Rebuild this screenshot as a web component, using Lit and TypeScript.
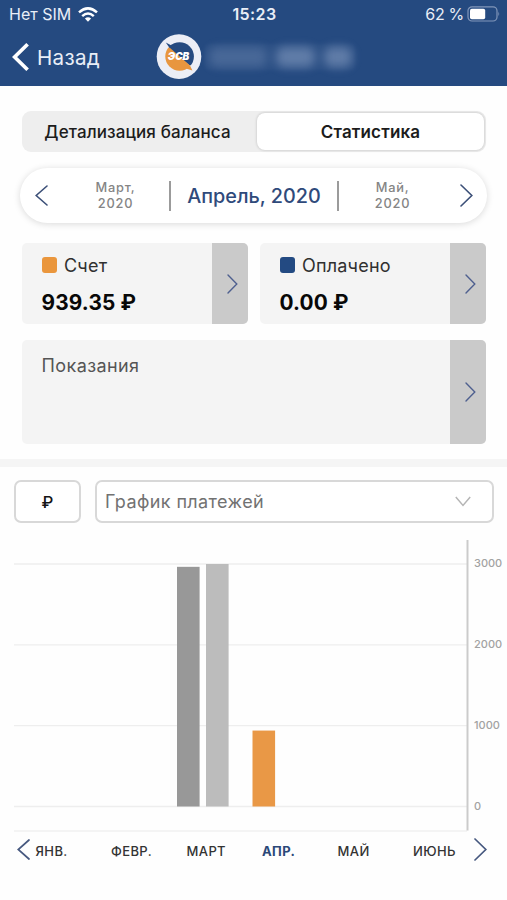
import { LitElement, html, css, svg } from "lit";
import { customElement, property } from "lit/decorators.js";
import { classMap } from "lit/directives/class-map.js";

const chevron = (w: number, h: number, left = false, stroke = 1.6) => html`
  <svg width=${w} height=${h} viewBox="0 0 ${w} ${h}" fill="none" stroke="currentColor" stroke-width=${stroke} stroke-linecap="round">
    <path d=${left ? `M${w - 1} 1L1.2 ${h / 2}L${w - 1} ${h - 1}` : `M1 1L${w - 1.2} ${h / 2}L1 ${h - 1}`} />
  </svg>`;

@customElement("top-bar")
export class TopBar extends LitElement {
  static styles = css`
    :host { display: block; height: 86px; background: #254a80; color: #e9eef7; }
    .status { display: grid; grid-template-columns: 1fr auto 1fr; height: 28px; align-items: center; padding: 0 7px 0 9px; font-size: 16px; }
    .left, .right { display: flex; align-items: center; }
    .left { gap: 7px; }
    .right { justify-content: flex-end; gap: 3px; }
    .charge { letter-spacing: -0.3px; }
    .time { font-weight: 600; letter-spacing: 0.4px; }
    .nav { display: flex; align-items: center; height: 58px; padding-left: 12px; }
    .back { display: flex; align-items: center; gap: 8px; width: 144px; font-size: 20.6px; letter-spacing: 0.3px; }
    .account { display: flex; align-items: center; height: 26px; width: 150px; margin-left: 3px; border-radius: 5px; background: rgba(150, 172, 208, 0.06); filter: blur(1.5px); }
    .chips { display: flex; align-items: center; gap: 9px; padding-left: 4px; filter: blur(5px); opacity: 0.42; }
    .chip { height: 20px; border-radius: 8px; background: #a9bbd9; }
    .c1 { width: 58px; opacity: 0.55; }
    .c2 { width: 39px; }
    .c3 { width: 28px; }
    svg { display: block; flex: none; }
  `;
  render() {
    return html`
      <div class="status">
        <div class="left">
          <span>Нет SIM</span>
          <svg width="20" height="15" viewBox="0 0 20 15" fill="none" stroke="#fff" stroke-width="2.5">
            <path d="M1 5.4Q10-2.6 19 5.4" /><path d="M4.2 9.1Q10 3.8 15.8 9.1" />
            <path d="M10 14.8L6.9 11.5Q10 8.9 13.1 11.5Z" fill="#fff" stroke="none" />
          </svg>
        </div>
        <span class="time">15:23</span>
        <div class="right">
          <span class="charge">62 %</span>
          <svg width="33" height="16" viewBox="0 0 33 16">
            <rect x="1" y="0.8" width="29" height="14.2" rx="4" fill="none" stroke="#8196b9" stroke-width="1.2" />
            <rect x="3" y="2.8" width="15.2" height="10.4" rx="1.8" fill="#fff" />
            <path d="M31.4 5.6Q33 7.9 31.4 10.2Z" fill="#8196b9" />
          </svg>
        </div>
      </div>
      <div class="nav">
        <div class="back">
          <svg width="17" height="28" viewBox="0 0 17 28" fill="none" stroke="#fff" stroke-width="3.7">
            <path d="M15.6 1.3L2.6 14L15.6 26.7" />
          </svg>
          <span>Назад</span>
        </div>
        <svg width="46" height="46" viewBox="0 0 46 46">
          <defs>
            <clipPath id="upper"><path d="M15 4H42V33.5L33 31L15 16L10 8Z" /></clipPath>
            <clipPath id="lower"><path d="M4 13H12.5L33 31.5L38 40H4Z" /></clipPath>
          </defs>
          <circle cx="23" cy="22.6" r="22.3" fill="#eceef6" />
          <circle cx="23.6" cy="22.5" r="14.3" fill="#254a80" clip-path="url(#upper)" />
          <circle cx="23.6" cy="22.5" r="14.3" fill="#e8963f" clip-path="url(#lower)" />
          <path d="M9.8 8.6L17.4 12.4L20.5 11L23 24L14.6 15.6Z" fill="#254a80" />
          <path d="M13.5 13.5L34 31.6L36.4 36.6L29 34.2L14 23Z" fill="#e8963f" />
          <text x="22.5" y="26.3" text-anchor="middle" font-family="Inter, sans-serif" font-size="10.4" font-weight="900" font-style="italic" textLength="21.5" lengthAdjust="spacingAndGlyphs" fill="#fff">ЭСВ</text>
        </svg>
        <div class="account"><div class="chips"><i class="chip c1"></i><i class="chip c2"></i><i class="chip c3"></i></div></div>
      </div>`;
  }
}

@customElement("summary-card")
export class SummaryCard extends LitElement {
  @property() label = "";
  @property() amount = "";
  @property() tone = "";
  static styles = css`
    :host { display: flex; border-radius: 5px; overflow: hidden; background: #f4f4f4; }
    .body { flex: 1; padding: 9px 0 0 20px; }
    .label { display: flex; align-items: center; gap: 7px; height: 26px; font-size: 18px; color: #303030; letter-spacing: 0.2px; }
    .muted { color: #555; padding-top: 3px; letter-spacing: 0.4px; }
    .swatch { width: 15.5px; height: 15.5px; border-radius: 3px; }
    .orange { background: #ea963c; }
    .blue { background: #234a82; }
    .amount { margin-top: 12px; line-height: 26px; font-size: 20.8px; font-weight: 700; color: #080808; letter-spacing: 0.15px; }
    .more { display: flex; align-items: center; justify-content: center; width: 35.5px; background: #cacaca; color: #4f608f; padding-left: 6px; box-sizing: border-box; }
  `;
  render() {
    return html`
      <div class="body">
        <div class=${classMap({ label: true, muted: !this.tone })}>
          ${this.tone ? html`<i class="swatch ${this.tone}"></i>` : ""}<span>${this.label}</span>
        </div>
        ${this.amount ? html`<div class="amount">${this.amount}</div>` : ""}
      </div>
      <div class="more">${chevron(11, 20, false, 1.4)}</div>`;
  }
}

@customElement("payment-chart")
export class PaymentChart extends LitElement {
  private ticks = [3000, 2000, 1000, 0];
  private bars = [
    { x: 177, value: 2965, fill: "#989898" },
    { x: 206, value: 3000, fill: "#bcbcbc" },
    { x: 252.5, value: 939.35, fill: "#e99846" },
  ];
  private months = ["ЯНВ.", "ФЕВР.", "МАРТ", "АПР.", "МАЙ", "ИЮНЬ"];
  private y(value: number) {
    return 266.5 - (value / 3000) * 242.5;
  }
  static styles = css`
    :host { display: block; }
    .plot { display: block; }
    .tick { font: 500 11px Inter, sans-serif; fill: #a2a2a2; }
    .months { display: flex; align-items: center; height: 38px; padding-left: 17px; font-size: 13px; font-weight: 500; letter-spacing: 0.4px; color: #333; }
    .prev, .next { display: flex; color: #46587f; }
    .prev { width: 18.5px; margin-top: -3px; }
    .next { margin: -4px 0 0 -14.5px; }
    .month { width: 75.5px; flex: none; }
    .current { color: #2b4878; font-weight: 700; }
  `;
  render() {
    return html`
      <svg class="plot" width="507" height="292" viewBox="0 0 507 292">
        ${this.ticks.map((t) => svg`
          <path d="M14 ${this.y(t)}H467" stroke="#eeeeee" stroke-width="1.4" />
          <text class="tick" x="474" y=${this.y(t) + 3}>${t}</text>`)}
        <path d="M14 291H467" stroke="#f0f0f0" stroke-width="1.6" />
        <path d="M467.5 0V290.5" stroke="#cbcbcb" stroke-width="2" />
        ${this.bars.map((b) => svg`<rect x=${b.x} y=${this.y(b.value)} width="22.6" height=${266.5 - this.y(b.value)} fill=${b.fill} />`)}
      </svg>
      <div class="months">
        <span class="prev">${chevron(13, 21, true, 1.7)}</span>
        ${this.months.map((m, i) => html`<div class=${classMap({ month: true, current: i === 3 })}>${m}</div>`)}
        <span class="next">${chevron(13, 23, false, 1.7)}</span>
      </div>`;
  }
}

@customElement("app-root")
export class AppRoot extends LitElement {
  static styles = css`
    :host { display: block; height: 900px; overflow: hidden; background: #fefefe; font-family: Inter, "Liberation Sans", sans-serif; }
    .tabs { display: flex; box-sizing: border-box; width: 464px; height: 41px; margin: 25px 0 0 22px; padding: 2px; border-radius: 9px; background: #eeeeee; font-size: 17px; color: #1c1c1c; }
    .tab { display: flex; align-items: center; justify-content: center; flex: 1; padding-right: 6px; font-weight: 500; letter-spacing: 0.1px; }
    .tab.active { box-sizing: border-box; flex: none; width: 227px; padding: 0; border-radius: 8px; background: #fff; box-shadow: 0 0 3px rgba(0, 0, 0, 0.22); font-weight: 600; letter-spacing: 0.15px; }
    .switcher { display: flex; align-items: center; box-sizing: border-box; width: 467px; height: 55px; margin: 16px 0 0 20px; padding: 0 13px 0 15px; border-radius: 28px; background: #fff; box-shadow: 0 1px 7px rgba(0, 0, 0, 0.15); }
    .arrow { display: flex; width: 14px; color: #3c5078; }
    .near { box-sizing: border-box; text-align: center; font-size: 12.8px; line-height: 15.5px; color: #858585; letter-spacing: 0.75px; font-weight: 500; }
    .near.prev { width: 120px; padding-left: 13px; }
    .near.next { width: 121px; padding-right: 14px; }
    .current { display: flex; align-items: center; justify-content: center; box-sizing: border-box; width: 170px; height: 30px; border: solid #9b9b9b; border-width: 0 2px; font-size: 19.8px; font-weight: 500; color: #2f4a7b; }
    .cards { display: grid; grid-template-columns: 226px 226px; grid-template-rows: 81px 104px; gap: 16px 12px; margin: 20px 0 0 21.5px; }
    .wide { grid-column: 1 / 3; }
    .band { height: 8px; margin-top: 15px; background: #f5f5f5; }
    .filters { display: flex; gap: 14px; margin: 13px 0 0 14px; height: 43px; }
    .box { display: flex; align-items: center; box-sizing: border-box; border: 2px solid #d8d8d8; border-radius: 7px; background: #fff; }
    .unit { width: 67px; justify-content: center; font-size: 16.5px; font-weight: 500; color: #151515; }
    .select { width: 399px; justify-content: space-between; padding: 0 21px 0 8px; font-size: 18px; color: #727272; letter-spacing: 0.4px; }
    payment-chart { margin-top: 17px; }
  `;
  render() {
    return html`
      <top-bar></top-bar>
      <div class="tabs"><div class="tab">Детализация баланса</div><div class="tab active">Статистика</div></div>
      <div class="switcher">
        <span class="arrow">${chevron(13, 21, true)}</span>
        <div class="near prev">Март,<br />2020</div>
        <div class="current">Апрель, 2020</div>
        <div class="near next">Май,<br />2020</div>
        <span class="arrow">${chevron(13, 23)}</span>
      </div>
      <div class="cards">
        <summary-card label="Счет" amount="939.35 ₽" tone="orange"></summary-card>
        <summary-card label="Оплачено" amount="0.00 ₽" tone="blue"></summary-card>
        <summary-card class="wide" label="Показания"></summary-card>
      </div>
      <div class="band"></div>
      <div class="filters">
        <div class="box unit">₽</div>
        <div class="box select">
          <span>График платежей</span>
          <svg width="16" height="11" viewBox="0 0 16 11" fill="none" stroke="#b5b5b5" stroke-width="1.5"><path d="M0.8 1L8 9.4L15.2 1" /></svg>
        </div>
      </div>
      <payment-chart></payment-chart>`;
  }
}
